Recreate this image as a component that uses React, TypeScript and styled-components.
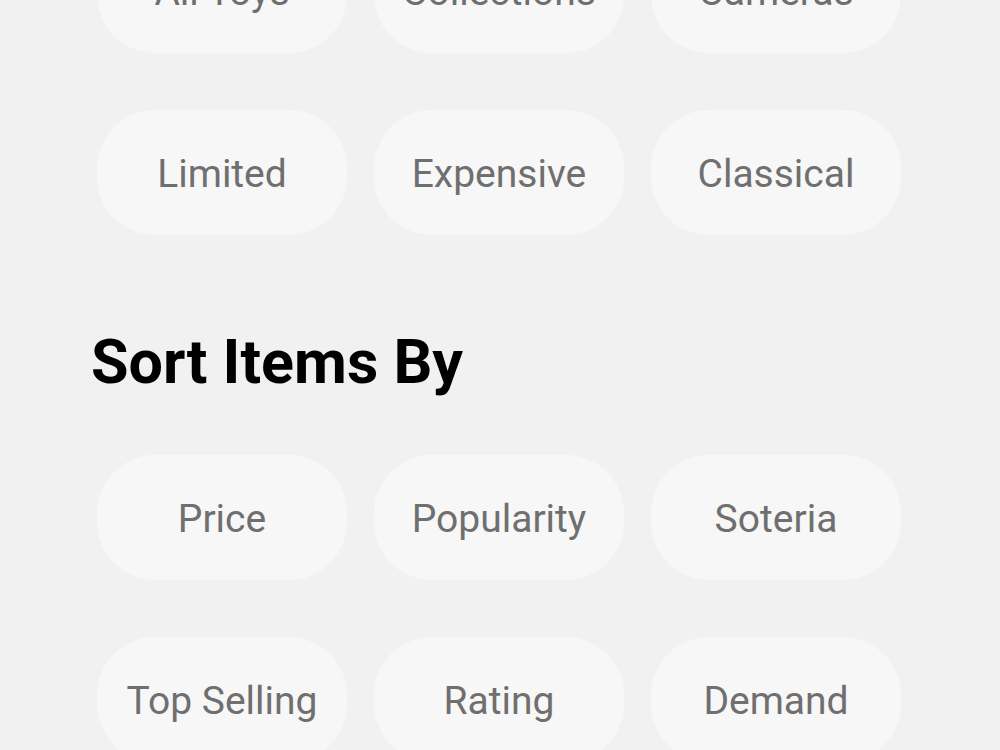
import styled, { createGlobalStyle } from "styled-components";

const GlobalStyle = createGlobalStyle`
  html, body {
    margin: 0;
    padding: 0;
    background: #f1f1f1;
    overflow: hidden;
  }
`;

const Page = styled.div`
  width: 1000px;
  height: 750px;
  overflow: hidden;
  background: #f1f1f1;
  font-family: Roboto, "Noto Sans", sans-serif;
`;

const Content = styled.div`
  display: flex;
  flex-direction: column;
  padding-left: 97px;
  margin-top: -72px;
`;

const ChipGrid = styled.div`
  display: grid;
  grid-template-columns: repeat(3, 250px);
  column-gap: 27px;
  row-gap: 57px;
`;

const Chip = styled.button`
  all: unset;
  box-sizing: border-box;
  height: 125px;
  padding-top: 3px;
  border-radius: 58px;
  background: #f7f7f7;
  display: flex;
  align-items: center;
  justify-content: center;
  color: #6f6f6f;
  font-family: Roboto, "Noto Sans", sans-serif;
  font-size: 39px;
  font-weight: 400;
  letter-spacing: 0;
`;

const Heading = styled.h2`
  margin: 0;
  padding: 96px 0 62px;
  margin-left: -6px;
  color: #000;
  font-family: Roboto, "Noto Sans", sans-serif;
  font-size: 61px;
  font-weight: 700;
  line-height: 62px;
`;

const categories = ["All Toys", "Collections", "Cameras", "Limited", "Expensive", "Classical"];
const sortOptions = ["Price", "Popularity", "Soteria", "Top Selling", "Rating", "Demand"];

export default function App() {
  return (
    <Page>
      <GlobalStyle />
      <Content>
        <ChipGrid>
          {categories.map((c) => (
            <Chip key={c}>{c}</Chip>
          ))}
        </ChipGrid>
        <Heading>Sort Items By</Heading>
        <ChipGrid>
          {sortOptions.map((s) => (
            <Chip key={s}>{s}</Chip>
          ))}
        </ChipGrid>
      </Content>
    </Page>
  );
}
